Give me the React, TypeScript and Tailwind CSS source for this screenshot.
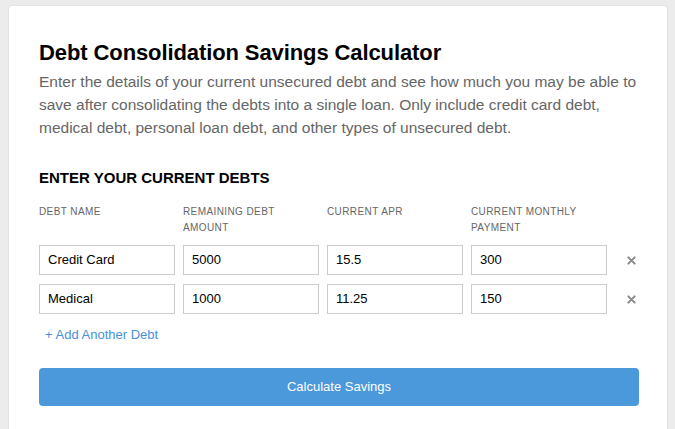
import React from "react";

const rows = [
  { name: "Credit Card", amount: "5000", apr: "15.5", pay: "300" },
  { name: "Medical", amount: "1000", apr: "11.25", pay: "150" },
];

function XIcon() {
  return (
    <svg width="9" height="9" viewBox="0 0 10 10" className="block">
      <path d="M1.5 1.5 L8.5 8.5 M8.5 1.5 L1.5 8.5" stroke="#888" strokeWidth="2.2" strokeLinecap="round" />
    </svg>
  );
}

export default function App() {
  return (
    <div className="min-h-[429px] bg-[#ececec] pt-[5px] pl-[8px]" style={{ fontFamily: "'Liberation Sans', Arial, sans-serif" }}>
      <div className="w-[660px] h-[430px] bg-white border border-[#e2e2e2] rounded-[4px] pl-[30px] pt-[33px]">
        <h1 className="text-[22px] leading-[28px] font-bold text-black tracking-[-0.1px]">Debt Consolidation Savings Calculator</h1>
        <p className="mt-[3px] w-[600px] text-[15.5px] leading-[23px] text-[#666]">
          Enter the details of your current unsecured debt and see how much you may be able to save after consolidating the debts into a single loan. Only include credit card debt, medical debt, personal loan debt, and other types of unsecured debt.
        </p>
        <h2 className="mt-[29px] text-[15px] leading-[20px] font-bold text-black">ENTER YOUR CURRENT DEBTS</h2>
        <div className="mt-[16px] flex gap-[8px] text-[10px] leading-[16px] tracking-[0.4px] text-[#666] uppercase">
          <div className="w-[136px]">Debt Name</div>
          <div className="w-[136px]">Remaining Debt<br />Amount</div>
          <div className="w-[136px]">Current APR</div>
          <div className="w-[136px]">Current Monthly<br />Payment</div>
        </div>
        <div className="mt-[9px] flex flex-col gap-[9px]">
          {rows.map((r) => (
            <div key={r.name} className="flex items-center gap-[8px]">
              {[r.name, r.amount, r.apr, r.pay].map((v, i) => (
                <div key={i} className="w-[136px] h-[30px] border border-[#ccc] flex items-center pl-[8px] text-[13px] text-black">
                  {v}
                </div>
              ))}
              <div className="ml-[12px]">
                <XIcon />
              </div>
            </div>
          ))}
        </div>
        <div className="mt-[12px] pl-[6px] text-[13px] leading-[18px] text-[#4a90d9]">+ Add Another Debt</div>
        <div className="mt-[24px] w-[600px] h-[38px] rounded-[4px] bg-[#4b98da] flex items-center justify-center text-[13px] text-white">
          Calculate Savings
        </div>
      </div>
    </div>
  );
}
